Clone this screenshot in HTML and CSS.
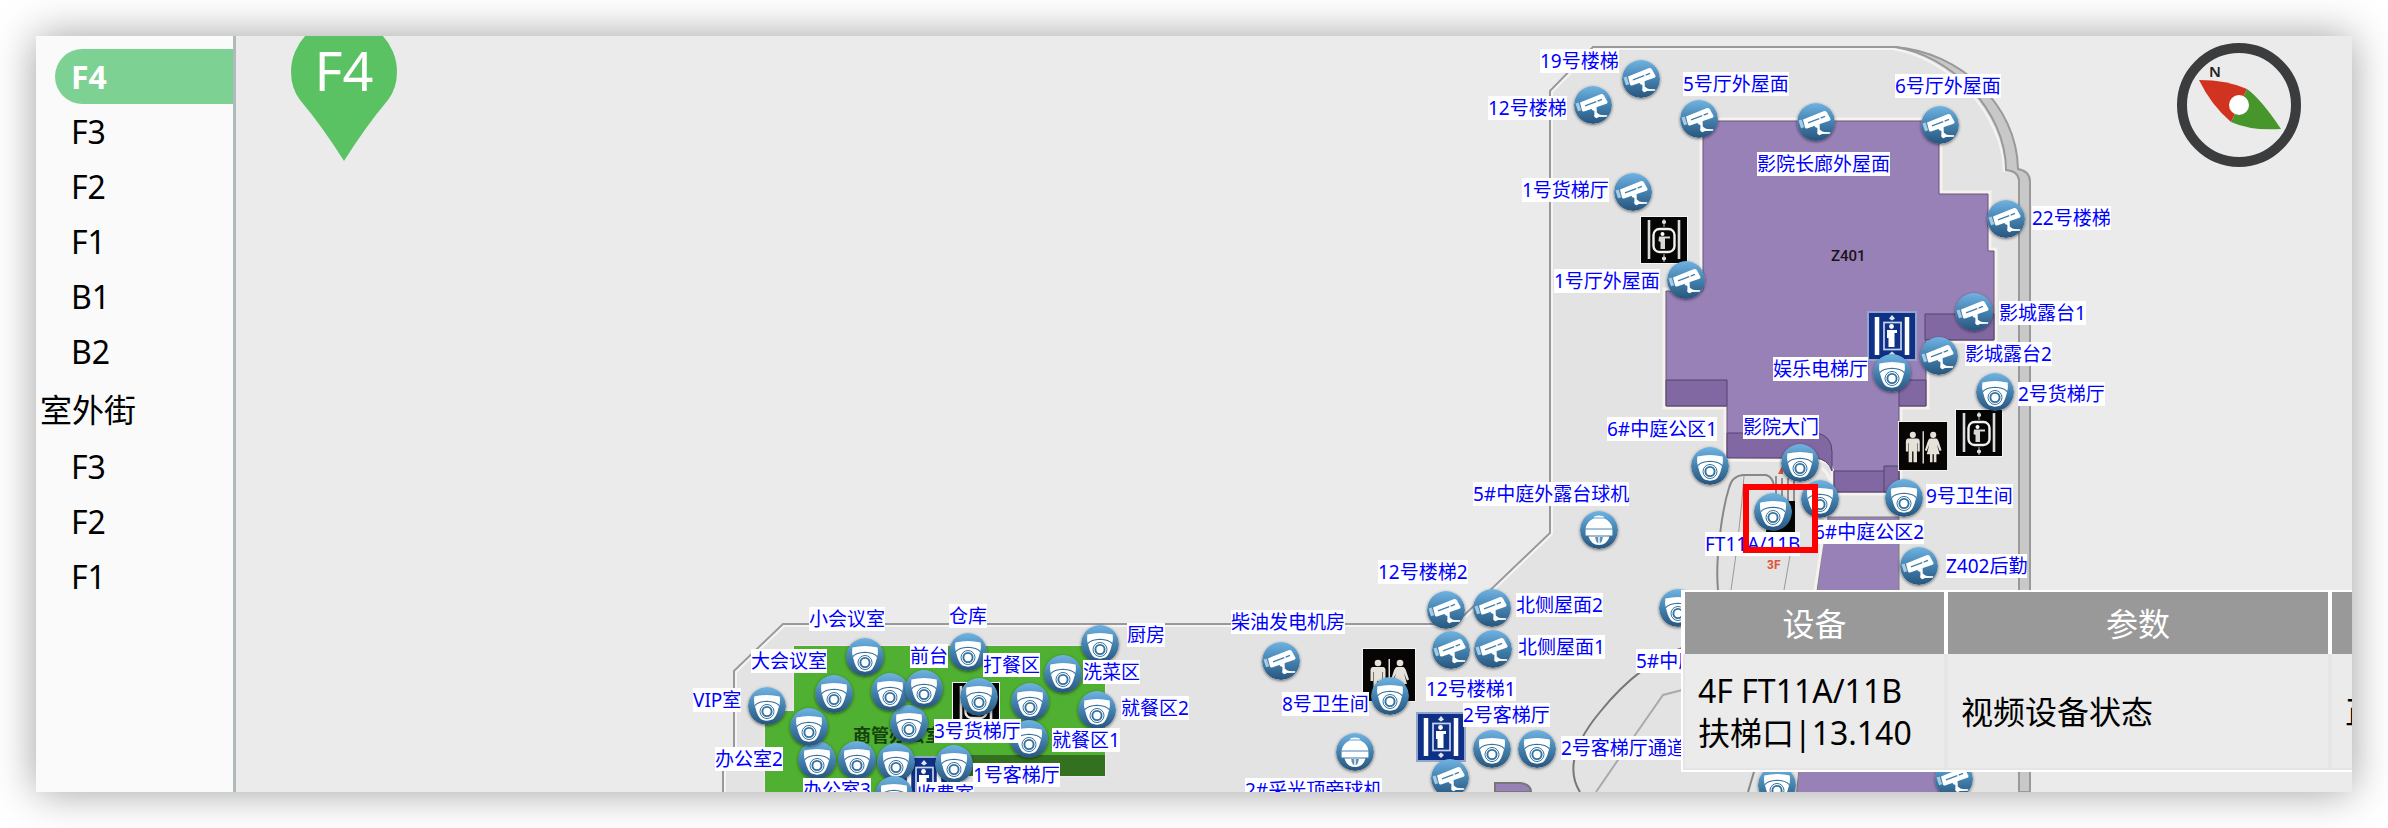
FILE: index.html
```html
<!DOCTYPE html>
<html lang="zh-CN">
<head>
<meta charset="utf-8">
<title>楼层设备地图</title>
<link rel="stylesheet" href="styles.css">
</head>
<body>
<svg class="defs" width="0" height="0" aria-hidden="true">
  <defs>
    <linearGradient id="pin-fill" x1="0" y1="0" x2="0" y2="1">
      <stop offset="0" stop-color="#6fb3e2"/>
      <stop offset="0.5" stop-color="#4482af"/>
      <stop offset="1" stop-color="#27557d"/>
    </linearGradient>
    <symbol id="cam" viewBox="0 0 38 38">
      <circle cx="19" cy="19" r="19" fill="url(#pin-fill)"/>
      <path d="M1.5 17.5 4.6 16.6 7.2 24.3 4 25.2Z" fill="#a6cbe3"/>
      <path d="M6 16.4 26.5 8.2Q28.6 7.4 29.8 9.2L33.4 15.4Q34 17 32.4 17.7L10 25.4Q8.4 25.8 8 24.4Z" fill="#fff"/>
      <path d="M11 19.8 28 13.4" stroke="#3f7fae" stroke-width="1.3" stroke-dasharray="12 1.5"/>
      <path d="M17.5 22.4 22.6 20.8 22.8 26.4Q25.6 29 27.6 29L33.4 29.2 33 30.8 25 31 22.4 32.2Q19.4 31 20.4 28.4L20.4 25 18 24Z" fill="#fff"/>
    </symbol>
    <symbol id="dome" viewBox="0 0 38 38">
      <circle cx="19" cy="19" r="19" fill="url(#pin-fill)"/>
      <path d="M6.3 9.6Q19 6.4 31.7 9.6 32.6 15.6 30.8 20 28.4 30.4 24.4 32.6 19 34.8 13.6 32.6 9.6 30.4 7.2 20 5.4 15.6 6.3 9.6Z" fill="#fff"/>
      <g fill="none" stroke="#33719e">
        <path d="M6.8 18.6Q10 14.6 19 14.2 28 14.6 31.2 18.6" stroke-width="1.1"/>
        <circle cx="19" cy="24.5" r="7" stroke-width="1"/>
        <circle cx="19" cy="24.5" r="4.6" stroke-width="1.9"/>
      </g>
    </symbol>
    <symbol id="ball" viewBox="0 0 38 38">
      <circle cx="19" cy="19" r="19" fill="url(#pin-fill)"/>
      <path d="M13.8 6.5Q14.5 4.6 19 4.6 23.5 4.6 24.2 6.5Z" fill="#fff"/>
      <path d="M13.5 7.6H24.5Q31 10.5 32.5 17.4H5.5Q7 10.5 13.5 7.6Z" fill="#fff"/>
      <path d="M5.6 18.6H32.4V24.6H5.6Z" fill="#fff"/>
      <path d="M8.5 25.6H29.5Q27 34 19 34 11 34 8.5 25.6Z" fill="#fff"/>
      <path d="M15.2 26H18.3V32.5Q15.5 31 15.2 26ZM19.7 26H22.8Q22.5 31 19.7 32.5Z" fill="#5e93ba"/>
    </symbol>
    <symbol id="cargo-lift" viewBox="0 0 48 48">
      <path d="M0 0H48V48H0Z" fill="#f4f4f2"/>
      <path d="M1 1H47V47H1Z" fill="#060505"/>
      <path d="M9 4V43M39 4V43" stroke="#dcdcd8" stroke-width="2.6"/>
      <rect x="13.5" y="13" width="21" height="23" rx="6" fill="none" stroke="#f2f2ee" stroke-width="2.4"/>
      <circle cx="24" cy="6" r="2" fill="#fff"/><circle cx="24" cy="42.5" r="2" fill="#fff"/>
      <path d="M24 3V11M24 38V46" stroke="#bbb" stroke-width="1"/>
      <circle cx="22.5" cy="18" r="2" fill="#fff"/>
      <path d="M19 20.5H30V22.5H25V33H20.5V26L18.5 25Z" fill="#d8d8d4"/>
    </symbol>
    <symbol id="guest-lift" viewBox="0 0 50 50">
      <path d="M0 0H50V50H0Z" fill="#93a5cb"/>
      <path d="M2 2H48V48H2Z" fill="#0f3087"/>
      <path d="M10 6V44M40 6V44" stroke="#fff" stroke-width="4.5"/>
      <rect x="17" y="11.5" width="17" height="27" fill="none" stroke="#c9d4ec" stroke-width="1.7"/>
      <circle cx="24.5" cy="15.5" r="2.4" fill="#fff"/>
      <path d="M20 19H30V22H27.5V36H21.5V27H20Z" fill="#fff"/>
      <path d="M25 4 28 7.5 25 9.5 22 7.5ZM25 46 28 43 25 40.5 22 43Z" fill="#dfe6f5"/>
    </symbol>
    <symbol id="toilet" viewBox="0 0 54 54">
      <path d="M0 0H54V54H0Z" fill="#f4f4f2"/>
      <path d="M1 1H53V53H1Z" fill="#070404"/>
      <g fill="#e6e2da">
        <circle cx="16" cy="15" r="3.3"/>
        <path d="M10.5 19H21.5Q23.5 19.5 23.5 22V33H21V24H20.5V44.5H16.7V33H15.3V44.5H11.5V24H11V33H8.5V22Q8.5 19.5 10.5 19Z"/>
        <path d="M26.5 11H28V46H26.5Z"/>
        <circle cx="38" cy="15" r="3.3"/>
        <path d="M34.5 19H41.5Q43 19.5 44 22.5L47 31.5 45 32.5 42 25 45 36H41.5V44.5H38.7V36H37.3V44.5H34.5V36H31L34 25 31 32.5 29 31.5 32 22.5Q33 19.5 34.5 19Z"/>
      </g>
    </symbol>
  </defs>
</svg>

<main class="frame">
  <nav class="floors" aria-label="楼层">
    <button class="floor active" type="button" aria-current="true">F4</button>
    <button class="floor" type="button">F3</button>
    <button class="floor" type="button">F2</button>
    <button class="floor" type="button">F1</button>
    <button class="floor" type="button">B1</button>
    <button class="floor" type="button">B2</button>
    <h2 class="group">室外街</h2>
    <button class="floor" type="button">F3</button>
    <button class="floor" type="button">F2</button>
    <button class="floor" type="button">F1</button>
  </nav>

  <section class="map" aria-label="F4 平面图">
    <svg class="plan" width="2116" height="756" viewBox="236 36 2116 756">
      <!-- floor slab -->
      <path d="M1593 47H1895C1950 55 2006 110 2006 170Q2018 172 2019 180V792H723V765H734V671L783 624H1455L1550 533V91Z" fill="#e3e3e3"/>
      <!-- side wall -->
      <path d="M1895 47C1960 52 2017 105 2018 169Q2030 171 2030 182V792H2019V180Q2018 171 2006 170C2006 110 1950 55 1895 47Z" fill="#c8c8c8" stroke="#999" stroke-width="2"/>
      <path d="M723 792V765H734V671L783 624H1455L1550 533V91L1593 47H1895" fill="none" stroke="#999" stroke-width="2"/>
      <path d="M725 792V767H736V672L784 626H1456L1552 534V92L1594 49H1893C1948 58 2003 112 2004 172 2014 174 2016 181V792" fill="none" stroke="#f4f4f4" stroke-width="2"/>

      <!-- offices -->
      <path d="M794 646H1105V776H950V792H765V711H794Z" fill="#50b032" stroke="#f0e4ee" stroke-width="3" paint-order="stroke"/>
      <path d="M950 755H1105V776H950Z" fill="#33701f"/>
      <text class="room office" x="853" y="742">商管办公室</text>

      <!-- cinema -->
      <path d="M1703 121H1939V194H1988V251H1994V340H1926V406H1899V492H1834V471Q1832 459 1820 459L1727 458V406H1666V291H1703Z" fill="#9881b7" stroke="#f6f2ec" stroke-width="7" paint-order="stroke"/>
      <g fill="#8268a3" stroke="#54406e" stroke-width="1">
        <path d="M1666 380H1727V406H1666Z"/>
        <path d="M1727 433H1817Q1832 436 1832 452V471Q1828 459 1815 458H1727Z"/>
        <path d="M1834 471H1899V492H1834Z"/>
        <path d="M1884 466H1899V492H1884Z"/>
        <path d="M1899 380H1926V406H1899Z"/>
        <path d="M1925 314H1994V340H1925Z"/>
      </g>
      <path d="M1727 458V406H1666V291H1703V121H1939V194H1988V251H1994V340H1926V406H1899V492H1834V471" fill="none" stroke="#66557c" stroke-width="1"/>
      <text class="room" x="1831" y="261">Z401</text>

      <!-- lower shops -->
      <path d="M1826 517H1899V640H1940V800H1796L1811 640Z" fill="#9881b7" stroke="#7c7c7c" stroke-width="1"/>
      <path d="M1495 792V783H1520Q1531 784 1531 792Z" fill="#9881b7" stroke="#777" stroke-width="2"/>

      <!-- escalators and atrium -->
      <g fill="none">
        <path d="M1822 468Q1838 480 1826 516L1815 590" stroke="#f4f2ec" stroke-width="3"/>
        <path d="M1718 590C1715 560 1722 510 1729 488Q1732 476 1743 475H1766Q1773 477 1774 486" stroke="#888" stroke-width="2"/>
        <path d="M1744 476Q1740 530 1731 590M1791 550 1784 590" stroke="#999" stroke-width="1"/>
        <path d="M1776 476V500M1782 478V502M1788 478V502M1794 480V502M1774 488H1794" stroke="#8e8e8e" stroke-width="2"/>
        <path d="M1690 645Q1640 662 1600 712 1560 760 1580 792" stroke="#777" stroke-width="2"/>
        <path d="M1690 688 1663 695 1633 738 1596 792" stroke="#aaa" stroke-width="2"/>
        <path d="M1756 765 1748 792" stroke="#888" stroke-width="2"/>
      </g>
      <path d="M1770 501H1795V532H1766Z" fill="#050505"/>
      <path d="M1778 474 1783 464V474Z" fill="#e0523a"/>
      <text class="level" x="1767" y="569">3F</text>

      <!-- facilities -->
      <use href="#cargo-lift" x="1640" y="216" width="48" height="48"/>
      <use href="#cargo-lift" x="1955" y="409" width="48" height="48"/>
      <use href="#cargo-lift" x="952" y="682" width="48" height="48"/>
      <use href="#guest-lift" x="1867" y="310" width="50" height="52"/>
      <use href="#guest-lift" x="1416" y="712" width="50" height="50"/>
      <use href="#guest-lift" x="899" y="756" width="50" height="50"/>
      <use href="#toilet" x="1362" y="648" width="54" height="54"/>
      <use href="#toilet" x="1898" y="419" width="50" height="54"/>

      <!-- current floor marker -->
      <path d="M344 161Q322 126 300 100 291 88 291 72A53 53 0 0 1 397 72Q397 88 388 100 366 126 344 161Z" fill="#5bc263"/>
      <text class="marker" x="344" y="91">F4</text>
    </svg>

    <div class="pins" id="pins"></div>
    <div class="focus"></div>

    <svg class="compass" width="124" height="124" viewBox="0 0 124 124" role="img" aria-label="指北针">
      <circle cx="62" cy="62" r="57" fill="#ebebeb" stroke="#3a3c3e" stroke-width="10"/>
      <path d="M22 37Q50 37 70 46L54 79Q34 62 22 37Z" fill="#d13321"/>
      <path d="M70 46Q84 56 104 86 74 88 54 79Z" fill="#47962c"/>
      <circle cx="62" cy="62" r="10" fill="#fff"/>
      <text class="north" x="32" y="34">N</text>
    </svg>

    <div class="popup">
      <table>
        <thead>
          <tr><th class="device" scope="col">设备</th><th class="param" scope="col">参数</th><th class="value" scope="col">数值</th></tr>
        </thead>
        <tbody>
          <tr><td>4F FT11A/11B扶梯口|13.140</td><td>视频设备状态</td><td>正常</td></tr>
        </tbody>
      </table>
    </div>
  </section>
</main>
<script src="script.js"></script>
</body>
</html>
```
FILE: styles.css
```css
* { box-sizing: border-box; }

body {
  margin: 0;
  min-height: 100vh;
  padding: 36px;
  display: flex;
  background: #fff;
  color: #000;
  font-family: "Noto Sans", "Noto Sans CJK SC", sans-serif;
  font-size: 32px;
}

.defs { position: absolute; }

.frame {
  flex: 1;
  min-width: 0;
  display: flex;
  box-shadow: 0 0 40px rgba(0, 0, 0, 0.38);
}

.floors {
  flex: none;
  width: 200px;
  padding-top: 13px;
  display: flex;
  flex-direction: column;
  background: #fafafa;
  border-right: 3px solid #b0b9bc;
}

.floor {
  height: 55px;
  margin: 0 0 0 19px;
  padding: 0 16px;
  border: 0;
  border-radius: 28px 0 0 28px;
  background: none;
  color: inherit;
  font: inherit;
  line-height: 54px;
  text-align: left;
}

.floor.active {
  background: #7dd293;
  color: #fff;
  font-weight: 700;
}

.group {
  margin: 0;
  padding: 2px 0 0 4px;
  font-size: 32px;
  font-weight: 400;
  line-height: 58px;
}

.map {
  flex: 1;
  min-width: 0;
  position: relative;
  overflow: hidden;
  background: #ebebeb;
}

.plan {
  position: absolute;
  left: 0;
  top: 0;
}

.room {
  font-family: Roboto, "Noto Sans CJK SC", sans-serif;
  font-size: 15px;
  font-weight: 500;
  fill: #1a1418;
}

.office { font-size: 18px; font-weight: 700; fill: #14420c; }

.level {
  font-family: Roboto, sans-serif;
  font-size: 12px;
  font-weight: 700;
  fill: #e0523a;
}

.marker { font-size: 54px; fill: #fff; text-anchor: middle; }

.pin {
  position: absolute;
  width: 38px;
  height: 38px;
  margin: -19px 0 0 -19px;
  border-radius: 50%;
  box-shadow: 0 1px 3px rgba(0, 0, 0, 0.5);
}

.tag {
  position: absolute;
  height: 24px;
  background: #fff;
  color: #00f;
  font-size: 19px;
  line-height: 25px;
  white-space: nowrap;
}

.focus {
  position: absolute;
  left: 1507px;
  top: 448px;
  width: 75px;
  height: 69px;
  border: 6px solid #f00;
}

.compass {
  position: absolute;
  right: 51px;
  top: 7px;
}

.north { font-size: 15px; font-weight: 600; fill: #222; }

.popup {
  position: absolute;
  left: 1445px;
  top: 554px;
  border: 2px solid #fff;
  background: #ebebeb;
}

.popup table {
  width: 900px;
  table-layout: fixed;
  border-collapse: separate;
  border-spacing: 0;
}

.popup .device { width: 263px; }
.popup .param { width: 384px; }

.popup th,
.popup td {
  padding: 16px 13px 14px;
  border: solid #e5e5e5;
  border-width: 0 2px 2px;
  font-weight: 400;
  line-height: 42px;
  text-align: left;
}

.popup th {
  padding: 11px 10px 9px;
  border-color: #fff;
  border-bottom: 0;
  background: #999;
  color: #fff;
  text-align: center;
}
```
FILE: script.js
```js
// Plan coordinates of the visible map corner.
const origin = { x: 236, y: 36 };

// [icon, centre x, centre y]
const pins = [
  ["cam", 1641, 79], ["cam", 1593, 105], ["cam", 1699, 119], ["cam", 1816, 122],
  ["cam", 1940, 125], ["cam", 1633, 192], ["cam", 2006, 219], ["cam", 1686, 280],
  ["cam", 1974, 312], ["cam", 1939, 356], ["dome", 1892, 373], ["dome", 1995, 392],
  ["dome", 1710, 466], ["dome", 1800, 463], ["dome", 1820, 499], ["dome", 1904, 498],
  ["dome", 1773, 512], ["cam", 1919, 566], ["ball", 1599, 530], ["cam", 1446, 610],
  ["cam", 1492, 608], ["cam", 1451, 650], ["cam", 1493, 649], ["cam", 1281, 661],
  ["dome", 1390, 696], ["dome", 1492, 749], ["dome", 1537, 749], ["ball", 1355, 752],
  ["cam", 1450, 778], ["dome", 1678, 608], ["dome", 1777, 785], ["cam", 1954, 779],
  ["dome", 865, 657], ["dome", 834, 694], ["dome", 767, 706], ["dome", 817, 760],
  ["dome", 809, 727], ["dome", 857, 760], ["dome", 896, 762], ["dome", 894, 795],
  ["dome", 909, 724], ["dome", 890, 692], ["dome", 924, 689], ["dome", 968, 652],
  ["dome", 979, 697], ["dome", 1030, 702], ["dome", 1029, 739], ["dome", 1063, 674],
  ["dome", 1100, 644], ["dome", 1097, 710], ["dome", 954, 764]
];

// [text, left, top]
const tags = [
  ["19号楼梯", 1540, 49], ["12号楼梯", 1488, 96], ["5号厅外屋面", 1683, 72],
  ["影院长廊外屋面", 1757, 152], ["6号厅外屋面", 1895, 74], ["1号货梯厅", 1522, 178],
  ["22号楼梯", 2032, 206], ["1号厅外屋面", 1554, 269], ["影城露台1", 1999, 301],
  ["影城露台2", 1965, 342], ["娱乐电梯厅", 1773, 357], ["2号货梯厅", 2018, 382],
  ["6#中庭公区1", 1607, 417], ["影院大门", 1743, 415], ["9号卫生间", 1926, 484],
  ["6#中庭公区2", 1814, 520], ["FT11A/11B", 1705, 532], ["Z402后勤", 1946, 554],
  ["5#中庭外露台球机", 1473, 482], ["12号楼梯2", 1378, 560], ["北侧屋面2", 1516, 593],
  ["北侧屋面1", 1518, 635], ["12号楼梯1", 1426, 677], ["柴油发电机房", 1231, 610],
  ["8号卫生间", 1282, 692], ["2号客梯厅", 1463, 703], ["2号客梯厅通道", 1561, 736],
  ["2#采光顶旁球机", 1245, 778], ["5#中庭", 1636, 649], ["小会议室", 809, 607],
  ["大会议室", 751, 649], ["VIP室", 693, 688], ["办公室2", 715, 747],
  ["办公室3", 803, 778], ["前台", 910, 644], ["仓库", 949, 604],
  ["打餐区", 983, 653], ["3号货梯厅", 934, 719], ["洗菜区", 1083, 660],
  ["厨房", 1127, 623], ["就餐区2", 1121, 696], ["就餐区1", 1052, 728],
  ["1号客梯厅", 973, 763], ["收费室", 917, 782]
];

const layer = document.getElementById("pins");
const ns = "http://www.w3.org/2000/svg";

function place(el, x, y) {
  el.style.left = `${x - origin.x}px`;
  el.style.top = `${y - origin.y}px`;
  layer.append(el);
}

for (const [icon, x, y] of pins) {
  const svg = document.createElementNS(ns, "svg");
  svg.setAttribute("class", "pin");
  const use = document.createElementNS(ns, "use");
  use.setAttribute("href", `#${icon}`);
  svg.append(use);
  place(svg, x, y);
}

for (const [text, x, y] of tags) {
  const span = document.createElement("span");
  span.className = "tag";
  span.textContent = text;
  place(span, x, y);
}
```
